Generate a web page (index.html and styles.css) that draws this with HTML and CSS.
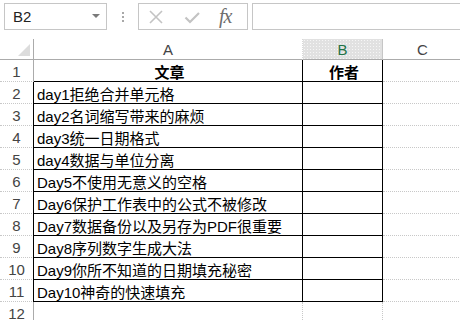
FILE: index.html
```html
<!DOCTYPE html>
<html>
<head>
<meta charset="utf-8">
<link rel="stylesheet" href="styles.css">
</head>
<body>
<div class="app">
  <div class="fbar">
    <div class="namebox"><span class="ref">B2</span><span class="caret"></span></div>
    <div class="grip"><i></i><i></i><i></i></div>
    <div class="tools">
      <svg class="ic" width="16" height="16" viewBox="0 0 16 16"><path d="M2 2 L14 14 M14 2 L2 14" stroke="#c3c3c3" stroke-width="1.6" fill="none"/></svg>
      <svg class="ic" width="16" height="16" viewBox="0 0 16 16"><path d="M1.5 8.5 L6 13 L15 4" stroke="#c3c3c3" stroke-width="2.2" fill="none"/></svg>
      <span class="fx">fx</span>
    </div>
    <div class="input"></div>
  </div>
  <div class="sheet">
    <div class="corner"><span class="tri"></span></div>
    <div class="ch">A</div>
    <div class="ch sel">B</div>
    <div class="ch">C</div>

    <div class="rh">1</div>
    <div class="c a head first">文章</div>
    <div class="c b head">作者</div>
    <div class="c g"></div>

    <div class="rh in">2</div><div class="c a">day1拒绝合并单元格</div><div class="c b"></div><div class="c g"></div>
    <div class="rh in">3</div><div class="c a">day2名词缩写带来的麻烦</div><div class="c b"></div><div class="c g"></div>
    <div class="rh in">4</div><div class="c a">day3统一日期格式</div><div class="c b"></div><div class="c g"></div>
    <div class="rh in">5</div><div class="c a">day4数据与单位分离</div><div class="c b"></div><div class="c g"></div>
    <div class="rh in">6</div><div class="c a">Day5不使用无意义的空格</div><div class="c b"></div><div class="c g"></div>
    <div class="rh in">7</div><div class="c a">Day6保护工作表中的公式不被修改</div><div class="c b"></div><div class="c g"></div>
    <div class="rh in">8</div><div class="c a">Day7数据备份以及另存为PDF很重要</div><div class="c b"></div><div class="c g"></div>
    <div class="rh in">9</div><div class="c a">Day8序列数字生成大法</div><div class="c b"></div><div class="c g"></div>
    <div class="rh in">10</div><div class="c a">Day9你所不知道的日期填充秘密</div><div class="c b"></div><div class="c g"></div>
    <div class="rh in">11</div><div class="c a">Day10神奇的快速填充</div><div class="c b"></div><div class="c g"></div>
    <div class="rh">12</div><div class="c g"></div><div class="c g"></div><div class="c g"></div>
  </div>
</div>
</body>
</html>
```
FILE: styles.css
```css
html, body {
  margin: 0;
  padding: 0;
  background: #fff;
  overflow: hidden;
}
.app {
  width: 460px;
  height: 320px;
  overflow: hidden;
  font-family: "Liberation Sans", "Noto Sans CJK SC", sans-serif;
}
.fbar {
  display: flex;
  align-items: center;
  height: 27px;
  padding: 3px 0 0 4px;
}
.namebox {
  box-sizing: border-box;
  width: 103px;
  height: 27px;
  border: 1px solid #c6c6c6;
  display: flex;
  align-items: center;
  justify-content: space-between;
  padding: 0 6px 0 8px;
}
.ref {
  font-size: 15px;
  color: #222;
}
.caret {
  width: 0;
  height: 0;
  border-left: 4px solid transparent;
  border-right: 4px solid transparent;
  border-top: 4px solid #7a7a7a;
  margin-top: -2px;
}
.grip {
  width: 31px;
  display: flex;
  flex-direction: column;
  align-items: center;
  gap: 2px;
}
.grip i {
  display: block;
  width: 2px;
  height: 2px;
  background: #a8a8a8;
}
.tools {
  box-sizing: border-box;
  width: 110px;
  height: 27px;
  border: 1px solid #c6c6c6;
  display: flex;
  align-items: center;
  padding-left: 9px;
  gap: 20px;
}
.fx {
  font-family: "Liberation Serif", serif;
  font-style: italic;
  font-size: 20px;
  color: #6e6e6e;
  margin-left: -1px;
  letter-spacing: -1px;
}
.input {
  box-sizing: border-box;
  margin-left: 4px;
  flex: 1;
  height: 27px;
  border: 1px solid #c6c6c6;
  border-right: none;
}
.sheet {
  margin-top: 9px;
  display: grid;
  grid-template-columns: 34px 269px 80px 80px;
  grid-template-rows: 21px repeat(12, 22px);
}
.corner {
  box-sizing: border-box;
  border-right: 1px solid #ababab;
  border-bottom: 1px solid #ababab;
  position: relative;
}
.tri {
  position: absolute;
  right: 3px;
  bottom: 3px;
  width: 0;
  height: 0;
  border-left: 12px solid transparent;
  border-bottom: 12px solid #dcdcdc;
}
.ch {
  box-sizing: border-box;
  border-bottom: 1px solid #ababab;
  border-right: 1px dotted #d8d8d8;
  font-size: 15px;
  color: #444;
  display: flex;
  align-items: center;
  justify-content: center;
  padding-top: 1px;
}
.ch.sel {
  background-color: #e1e1e1;
  background-image: radial-gradient(circle, #f6f6f6 0.7px, transparent 0.9px);
  background-size: 3px 3px;
  color: #217346;
  border-right: 1px solid #c6c6c6;
}
.rh {
  box-sizing: border-box;
  border-right: 1px solid #ababab;
  border-bottom: 1px dotted #c8c8c8;
  font-size: 15px;
  color: #444;
  display: flex;
  align-items: center;
  justify-content: center;
  padding-top: 2px;
}
.rh.in {
  border-right-color: #000;
}
.c {
  box-sizing: border-box;
  font-size: 15px;
  color: #000;
  display: flex;
  align-items: center;
  padding: 2px 0 0 3px;
  white-space: nowrap;
}
.c.a {
  border-bottom: 1px solid #000;
  border-right: 1px solid #000;
  margin-left: -1px;
  padding-left: 4px;
}
.c.a.first {
  margin-left: 0;
  padding-left: 3px;
}
.c.b {
  border-bottom: 1px solid #000;
  border-right: 1px solid #000;
}
.c.g {
  border-bottom: 1px dotted #c8c8c8;
  border-right: 1px dotted #c8c8c8;
}
.head {
  justify-content: center;
  font-weight: bold;
}
```
